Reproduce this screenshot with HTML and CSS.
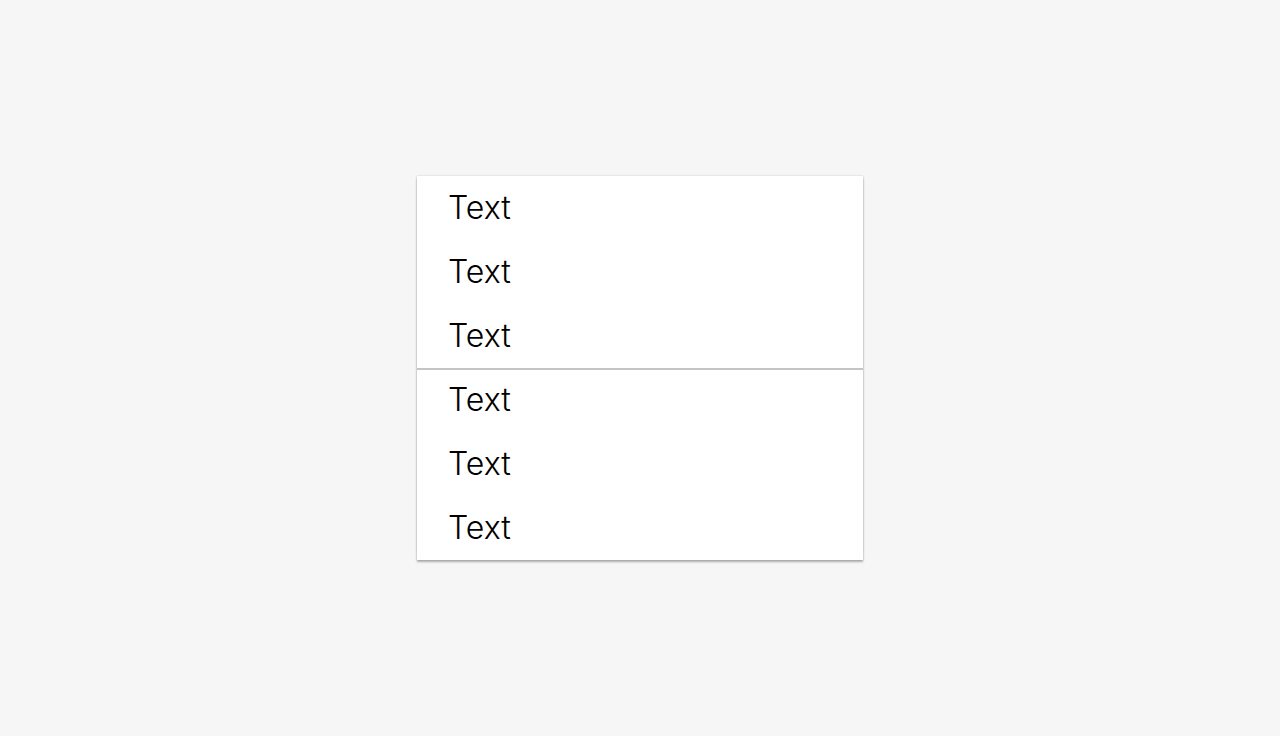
FILE: index.html
```html
<!DOCTYPE html>
<html>
<head>
<meta charset="utf-8">
<link rel="stylesheet" href="styles.css">
</head>
<body>
<ul class="menu">
  <li class="item">Text</li>
  <li class="item">Text</li>
  <li class="item">Text</li>
  <li class="item divided">Text</li>
  <li class="item">Text</li>
  <li class="item">Text</li>
</ul>
</body>
</html>
```

FILE: styles.css
```css
html, body {
  margin: 0;
  padding: 0;
}
body {
  background: #f6f6f6;
  min-height: 100vh;
  display: flex;
  align-items: center;
  justify-content: center;
  font-family: "Inter", sans-serif;
}
.menu {
  list-style: none;
  margin: 0;
  padding: 0;
  width: 446px;
  background: #fff;
  box-shadow: 0 0 2px rgba(0,0,0,0.18), 0 2px 2px rgba(0,0,0,0.28);
}
.item {
  box-sizing: border-box;
  height: 64px;
  display: flex;
  align-items: center;
  padding: 0 0 1px 31px;
  font-size: 32px;
  font-weight: 300;
  color: #000;
}
.divided {
  box-shadow: inset 0 2px 0 #c4c4c4;
}
```
